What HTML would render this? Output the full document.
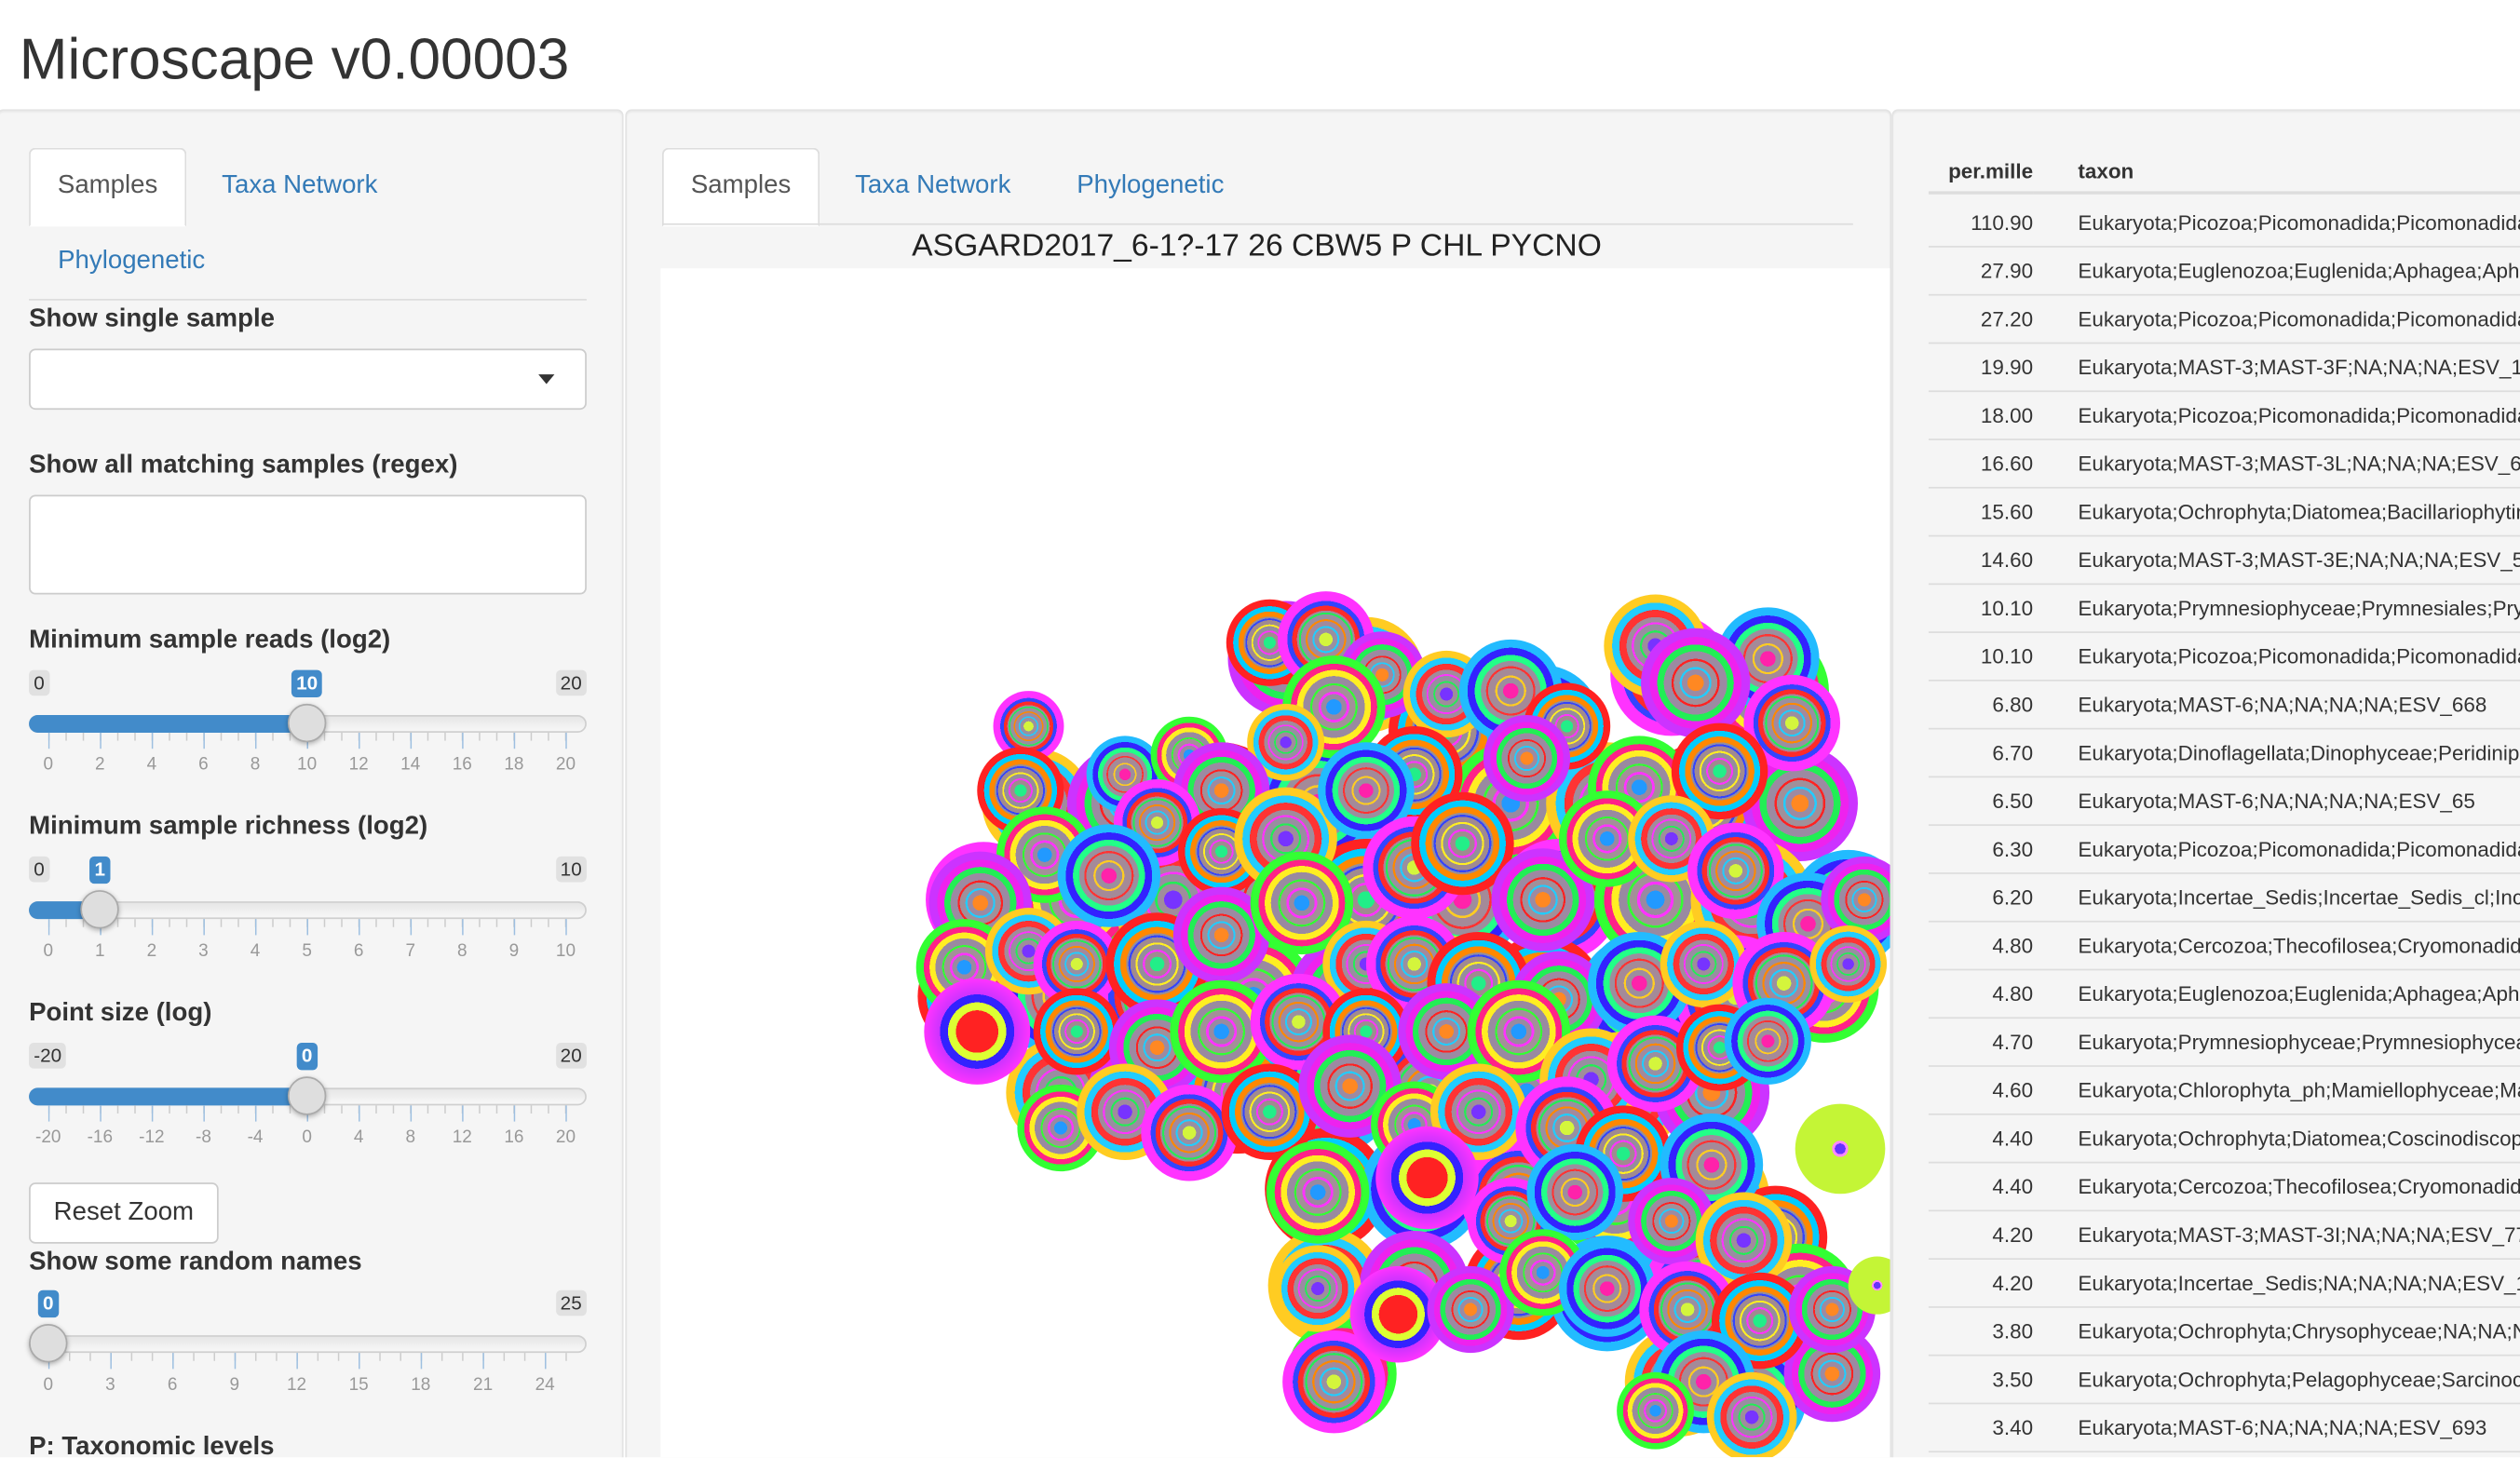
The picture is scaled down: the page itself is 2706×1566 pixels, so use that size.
<!DOCTYPE html>
<html><head><meta charset="utf-8">
<style>
html,body{margin:0;padding:0;width:2706px;height:1566px;overflow:hidden;background:#fff}
.wrap{position:absolute;left:0;top:0;width:1568px;height:907px;transform:scale(1.72577);transform-origin:0 0;font-family:"Liberation Sans",Arial,sans-serif;color:#333;overflow:hidden}
.abs{position:absolute}
h1{position:absolute;left:12px;top:14px;margin:0;font-size:36px;font-weight:500;color:#333;line-height:46px}
.panel{position:absolute;top:68px;height:860px;background:#f5f5f5;border:1px solid #e3e3e3;border-radius:4px;box-shadow:inset 0 1px 1px rgba(0,0,0,.05)}
.tab{position:absolute;font-size:16px;line-height:20px}
.tab.active{background:#fff;border:1px solid #ddd;border-bottom-color:transparent;border-radius:4px 4px 0 0;color:#555;text-align:center}
.link{color:#337ab7}
.lbl{position:absolute;left:18px;font-size:16px;font-weight:bold;color:#333;line-height:20px}
.box{position:absolute;left:18px;width:345px;background:#fff;border:1px solid #ccc;border-radius:4px}
.slider{position:absolute;left:18px;width:347px;height:60px}
.track{position:absolute;left:0;top:-5px;width:345px;height:9px;border:1px solid #cfcfcf;border-radius:6px;background:linear-gradient(#e6e6e6,#f7f7f7)}
.fill{position:absolute;left:0;top:-5px;height:11px;background:#428bca;border-radius:6px 0 0 6px}
.handle{position:absolute;top:-12px;width:24px;height:24px;margin-left:-12px;border-radius:50%;background:#dedede;border:1px solid #aaa;box-sizing:border-box;box-shadow:0 1px 3px rgba(0,0,0,.3)}
.mm{position:absolute;top:-33px;height:16px;line-height:16px;font-size:12px;background:#e1e1e1;border-radius:3px;padding:0 3px;color:#333}
.val{position:absolute;top:-33px;height:17px;line-height:17px;font-size:12px;background:#428bca;color:#fff;font-weight:bold;border-radius:3px;padding:0 3px;transform:translateX(-50%)}
.ticks{position:absolute;left:12px;top:6px;height:10px}
.tl{position:absolute;top:20px;font-size:11px;color:#999;transform:translateX(-50%)}
table{border-collapse:collapse;font-size:13px;color:#333}
.r{position:relative;height:30px;line-height:30px;width:65px;text-align:right;color:#333}
.r s{text-decoration:none;position:absolute;left:93px;top:0}
.r::after{content:"";position:absolute;left:0;bottom:0;width:380px;height:1px;background:#ddd}
</style></head><body><div class="wrap">
<h1>Microscape v0.00003</h1>

<div class="panel" style="left:-2px;width:388px"></div>
<div class="tab active" style="left:18px;top:92px;width:96px;height:47px;line-height:46px">Samples</div>
<div class="tab link" style="left:138px;top:106px">Taxa Network</div>
<div class="tab link" style="left:36px;top:153px">Phylogenetic</div>
<div class="abs" style="left:18px;top:186px;width:347px;height:1px;background:#ddd"></div>

<div class="lbl" style="top:189px">Show single sample</div>
<div class="box" style="top:217px;height:36px"><div class="abs" style="right:19px;top:15px;width:0;height:0;border-left:5px solid transparent;border-right:5px solid transparent;border-top:6px solid #333"></div></div>
<div class="lbl" style="top:280px">Show all matching samples (regex)</div>
<div class="box" style="top:308px;height:60px"></div>

<div class="lbl" style="top:389px">Minimum sample reads (log2)</div>
<div class="slider" style="top:450px">
 <div class="track"></div><div class="fill" style="width:173px"></div>
 <div class="mm" style="left:0">0</div><div class="mm" style="right:0">20</div><div class="val" style="left:173px">10</div>
 <div class="ticks" style="width:324px;background:linear-gradient(90deg,#9dbfe0 1px,transparent 1px) 0 0/32.2px 10px repeat-x,linear-gradient(90deg,#ccc 1px,transparent 1px) 0 0/10.733px 5px repeat-x"></div>
 <div class="tl" style="left:12px">0</div><div class="tl" style="left:44.2px">2</div><div class="tl" style="left:76.4px">4</div><div class="tl" style="left:108.6px">6</div><div class="tl" style="left:140.8px">8</div><div class="tl" style="left:173px">10</div><div class="tl" style="left:205.2px">12</div><div class="tl" style="left:237.4px">14</div><div class="tl" style="left:269.6px">16</div><div class="tl" style="left:301.8px">18</div><div class="tl" style="left:334px">20</div>
 <div class="handle" style="left:173px"></div>
</div>

<div class="lbl" style="top:505px">Minimum sample richness (log2)</div>
<div class="slider" style="top:566px">
 <div class="track"></div><div class="fill" style="width:44px"></div>
 <div class="mm" style="left:0">0</div><div class="mm" style="right:0">10</div><div class="val" style="left:44.2px">1</div>
 <div class="ticks" style="width:324px;background:linear-gradient(90deg,#9dbfe0 1px,transparent 1px) 0 0/32.2px 10px repeat-x,linear-gradient(90deg,#ccc 1px,transparent 1px) 0 0/10.733px 5px repeat-x"></div>
 <div class="tl" style="left:12px">0</div><div class="tl" style="left:44.2px">1</div><div class="tl" style="left:76.4px">2</div><div class="tl" style="left:108.6px">3</div><div class="tl" style="left:140.8px">4</div><div class="tl" style="left:173px">5</div><div class="tl" style="left:205.2px">6</div><div class="tl" style="left:237.4px">7</div><div class="tl" style="left:269.6px">8</div><div class="tl" style="left:301.8px">9</div><div class="tl" style="left:334px">10</div>
 <div class="handle" style="left:44.2px"></div>
</div>

<div class="lbl" style="top:621px">Point size (log)</div>
<div class="slider" style="top:682px">
 <div class="track"></div><div class="fill" style="width:173px"></div>
 <div class="mm" style="left:0">-20</div><div class="mm" style="right:0">20</div><div class="val" style="left:173px">0</div>
 <div class="ticks" style="width:324px;background:linear-gradient(90deg,#9dbfe0 1px,transparent 1px) 0 0/32.2px 10px repeat-x,linear-gradient(90deg,#ccc 1px,transparent 1px) 0 0/10.733px 5px repeat-x"></div>
 <div class="tl" style="left:12px">-20</div><div class="tl" style="left:44.2px">-16</div><div class="tl" style="left:76.4px">-12</div><div class="tl" style="left:108.6px">-8</div><div class="tl" style="left:140.8px">-4</div><div class="tl" style="left:173px">0</div><div class="tl" style="left:205.2px">4</div><div class="tl" style="left:237.4px">8</div><div class="tl" style="left:269.6px">12</div><div class="tl" style="left:301.8px">16</div><div class="tl" style="left:334px">20</div>
 <div class="handle" style="left:173px"></div>
</div>

<div class="abs" style="left:18px;top:736px;width:116px;height:36px;background:#fff;border:1px solid #ccc;border-radius:4px;font-size:16px;line-height:36px;text-align:center;color:#333">Reset Zoom</div>

<div class="lbl" style="top:776px">Show some random names</div>
<div class="slider" style="top:836px">
 <div class="track"></div>
 <div class="mm" style="right:0">25</div><div class="val" style="left:12px">0</div>
 <div class="ticks" style="width:324px;background:linear-gradient(90deg,#9dbfe0 1px,transparent 1px) 0 0/38.64px 10px repeat-x,linear-gradient(90deg,#ccc 1px,transparent 1px) 0 0/12.88px 5px repeat-x"></div>
 <div class="tl" style="left:12px">0</div><div class="tl" style="left:50.6px">3</div><div class="tl" style="left:89.3px">6</div><div class="tl" style="left:127.9px">9</div><div class="tl" style="left:166.6px">12</div><div class="tl" style="left:205.2px">15</div><div class="tl" style="left:243.8px">18</div><div class="tl" style="left:282.5px">21</div><div class="tl" style="left:321.1px">24</div>
 <div class="handle" style="left:12px"></div>
</div>
<div class="lbl" style="top:891px">P: Taxonomic levels</div>

<div class="panel" style="left:389px;width:786px"></div>
<div class="tab active" style="left:412px;top:92px;width:96px;height:47px;line-height:46px">Samples</div>
<div class="tab link" style="left:532px;top:106px">Taxa Network</div>
<div class="tab link" style="left:670px;top:106px">Phylogenetic</div>
<div class="abs" style="left:412px;top:139px;width:741px;height:1px;background:#ddd"></div>
<div class="abs" style="left:411px;top:142px;width:742px;text-align:center;font-size:19.5px;line-height:22px;color:#222">ASGARD2017_6-1?-17 26 CBW5 P CHL PYCNO</div>
<div class="abs" style="left:411px;top:167px;width:765px;height:740px;background:#fff;overflow:hidden">
<svg width="765" height="740" viewBox="411 167 765 740" xmlns="http://www.w3.org/2000/svg">
<defs>
<radialGradient id="g1"><stop offset="0" stop-color="#d4f53c"/><stop offset=".14" stop-color="#d4f53c"/><stop offset=".14" stop-color="#9a8fa0"/><stop offset=".24" stop-color="#9a8fa0"/><stop offset=".24" stop-color="#22ccff"/><stop offset=".28" stop-color="#22ccff"/><stop offset=".28" stop-color="#a3899c"/><stop offset=".38" stop-color="#a3899c"/><stop offset=".38" stop-color="#ff8800"/><stop offset=".42" stop-color="#ff8800"/><stop offset=".42" stop-color="#9a8fa0"/><stop offset=".52" stop-color="#9a8fa0"/><stop offset=".52" stop-color="#22ee55"/><stop offset=".56" stop-color="#22ee55"/><stop offset=".56" stop-color="#a3899c"/><stop offset=".6" stop-color="#a3899c"/><stop offset=".6" stop-color="#ff2a2a"/><stop offset=".7" stop-color="#ff2a2a"/><stop offset=".7" stop-color="#3344ff"/><stop offset=".8" stop-color="#3344ff"/><stop offset=".8" stop-color="#ff33ff"/><stop offset="1" stop-color="#ff33ff"/></radialGradient>
<radialGradient id="g2"><stop offset="0" stop-color="#22ee88"/><stop offset=".14" stop-color="#22ee88"/><stop offset=".14" stop-color="#a08a90"/><stop offset=".24" stop-color="#a08a90"/><stop offset=".24" stop-color="#ff33ff"/><stop offset=".28" stop-color="#ff33ff"/><stop offset=".28" stop-color="#948e9c"/><stop offset=".38" stop-color="#948e9c"/><stop offset=".38" stop-color="#ffee22"/><stop offset=".42" stop-color="#ffee22"/><stop offset=".42" stop-color="#a08a90"/><stop offset=".52" stop-color="#a08a90"/><stop offset=".52" stop-color="#3344ff"/><stop offset=".56" stop-color="#3344ff"/><stop offset=".56" stop-color="#948e9c"/><stop offset=".6" stop-color="#948e9c"/><stop offset=".6" stop-color="#ff8800"/><stop offset=".72" stop-color="#ff8800"/><stop offset=".72" stop-color="#00ccff"/><stop offset=".84" stop-color="#00ccff"/><stop offset=".84" stop-color="#ff2222"/><stop offset="1" stop-color="#ff2222"/></radialGradient>
<radialGradient id="g3"><stop offset="0" stop-color="#ff8822"/><stop offset=".15" stop-color="#ff8822"/><stop offset=".15" stop-color="#9c8aa2"/><stop offset=".25" stop-color="#9c8aa2"/><stop offset=".25" stop-color="#22ccff"/><stop offset=".29" stop-color="#22ccff"/><stop offset=".29" stop-color="#a0909a"/><stop offset=".4" stop-color="#a0909a"/><stop offset=".4" stop-color="#ff2222"/><stop offset=".44" stop-color="#ff2222"/><stop offset=".44" stop-color="#9c8aa2"/><stop offset=".58" stop-color="#9c8aa2"/><stop offset=".58" stop-color="#22ee55"/><stop offset=".7" stop-color="#22ee55"/><stop offset=".7" stop-color="#ee22ee"/><stop offset=".84" stop-color="#ee22ee"/><stop offset=".84" stop-color="#cc33ff"/><stop offset="1" stop-color="#cc33ff"/></radialGradient>
<radialGradient id="g4"><stop offset="0" stop-color="#2299ff"/><stop offset=".15" stop-color="#2299ff"/><stop offset=".15" stop-color="#998aa0"/><stop offset=".25" stop-color="#998aa0"/><stop offset=".25" stop-color="#ff33ff"/><stop offset=".3" stop-color="#ff33ff"/><stop offset=".3" stop-color="#a39098"/><stop offset=".42" stop-color="#a39098"/><stop offset=".42" stop-color="#33ff33"/><stop offset=".46" stop-color="#33ff33"/><stop offset=".46" stop-color="#998aa0"/><stop offset=".6" stop-color="#998aa0"/><stop offset=".6" stop-color="#ffee22"/><stop offset=".72" stop-color="#ffee22"/><stop offset=".72" stop-color="#ff2288"/><stop offset=".84" stop-color="#ff2288"/><stop offset=".84" stop-color="#33ff33"/><stop offset="1" stop-color="#33ff33"/></radialGradient>
<radialGradient id="g5"><stop offset="0" stop-color="#7733ff"/><stop offset=".15" stop-color="#7733ff"/><stop offset=".15" stop-color="#a08c9c"/><stop offset=".26" stop-color="#a08c9c"/><stop offset=".26" stop-color="#22ee55"/><stop offset=".3" stop-color="#22ee55"/><stop offset=".3" stop-color="#988ea0"/><stop offset=".42" stop-color="#988ea0"/><stop offset=".42" stop-color="#ff33ff"/><stop offset=".46" stop-color="#ff33ff"/><stop offset=".46" stop-color="#a08c9c"/><stop offset=".56" stop-color="#a08c9c"/><stop offset=".56" stop-color="#ff3333"/><stop offset=".7" stop-color="#ff3333"/><stop offset=".7" stop-color="#22ccff"/><stop offset=".84" stop-color="#22ccff"/><stop offset=".84" stop-color="#ffcc22"/><stop offset="1" stop-color="#ffcc22"/></radialGradient>
<radialGradient id="g6"><stop offset="0" stop-color="#ff22aa"/><stop offset=".15" stop-color="#ff22aa"/><stop offset=".15" stop-color="#9c8e9e"/><stop offset=".26" stop-color="#9c8e9e"/><stop offset=".26" stop-color="#ffcc22"/><stop offset=".3" stop-color="#ffcc22"/><stop offset=".3" stop-color="#a48a98"/><stop offset=".44" stop-color="#a48a98"/><stop offset=".44" stop-color="#ff3333"/><stop offset=".48" stop-color="#ff3333"/><stop offset=".48" stop-color="#9c8e9e"/><stop offset=".58" stop-color="#9c8e9e"/><stop offset=".58" stop-color="#22ff88"/><stop offset=".7" stop-color="#22ff88"/><stop offset=".7" stop-color="#3322ff"/><stop offset=".84" stop-color="#3322ff"/><stop offset=".84" stop-color="#22bbff"/><stop offset="1" stop-color="#22bbff"/></radialGradient>
<radialGradient id="g7"><stop offset="0" stop-color="#ff2222"/><stop offset=".4" stop-color="#ff2222"/><stop offset=".4" stop-color="#ddff33"/><stop offset=".55" stop-color="#ddff33"/><stop offset=".55" stop-color="#3322ff"/><stop offset=".7" stop-color="#3322ff"/><stop offset=".7" stop-color="#cc33ff"/><stop offset="1" stop-color="#ff33ff"/></radialGradient>
<radialGradient id="g8"><stop offset="0" stop-color="#6633ff"/><stop offset=".12" stop-color="#6633ff"/><stop offset=".12" stop-color="#ff88ff"/><stop offset=".18" stop-color="#ff88ff"/><stop offset=".18" stop-color="#c4f536"/><stop offset="1" stop-color="#c4f536"/></radialGradient>
</defs>
<g>
<circle cx="800" cy="410" r="36" fill="url(#g3)"/><circle cx="850" cy="420" r="36" fill="url(#g5)"/><circle cx="1040" cy="420" r="38" fill="url(#g1)"/><circle cx="1100" cy="430" r="38" fill="url(#g4)"/><circle cx="900" cy="455" r="36" fill="url(#g2)"/><circle cx="960" cy="450" r="36" fill="url(#g6)"/>
<circle cx="645" cy="500" r="34" fill="url(#g5)"/><circle cx="700" cy="500" r="36" fill="url(#g3)"/><circle cx="760" cy="500" r="38" fill="url(#g2)"/><circle cx="820" cy="500" r="38" fill="url(#g6)"/><circle cx="880" cy="500" r="38" fill="url(#g1)"/><circle cx="940" cy="500" r="38" fill="url(#g4)"/><circle cx="1000" cy="500" r="38" fill="url(#g5)"/><circle cx="1060" cy="500" r="38" fill="url(#g2)"/><circle cx="1120" cy="500" r="36" fill="url(#g3)"/>
<circle cx="612" cy="560" r="36" fill="url(#g1)"/><circle cx="670" cy="560" r="38" fill="url(#g4)"/><circle cx="730" cy="560" r="38" fill="url(#g5)"/><circle cx="790" cy="560" r="38" fill="url(#g3)"/><circle cx="850" cy="560" r="38" fill="url(#g2)"/><circle cx="910" cy="560" r="38" fill="url(#g6)"/><circle cx="970" cy="560" r="38" fill="url(#g1)"/><circle cx="1030" cy="560" r="38" fill="url(#g4)"/><circle cx="1090" cy="560" r="38" fill="url(#g5)"/><circle cx="1150" cy="565" r="36" fill="url(#g6)"/>
<circle cx="605" cy="620" r="34" fill="url(#g2)"/><circle cx="660" cy="620" r="38" fill="url(#g6)"/><circle cx="720" cy="620" r="38" fill="url(#g1)"/><circle cx="780" cy="620" r="38" fill="url(#g4)"/><circle cx="840" cy="620" r="38" fill="url(#g3)"/><circle cx="900" cy="620" r="38" fill="url(#g5)"/><circle cx="960" cy="620" r="38" fill="url(#g2)"/><circle cx="1020" cy="620" r="38" fill="url(#g6)"/><circle cx="1080" cy="620" r="38" fill="url(#g1)"/><circle cx="1135" cy="615" r="34" fill="url(#g4)"/>
<circle cx="660" cy="680" r="34" fill="url(#g5)"/><circle cx="715" cy="680" r="38" fill="url(#g3)"/><circle cx="770" cy="680" r="38" fill="url(#g2)"/><circle cx="830" cy="680" r="38" fill="url(#g6)"/><circle cx="890" cy="680" r="38" fill="url(#g1)"/><circle cx="950" cy="680" r="38" fill="url(#g4)"/><circle cx="1010" cy="680" r="38" fill="url(#g5)"/><circle cx="1065" cy="680" r="36" fill="url(#g3)"/>
<circle cx="825" cy="740" r="38" fill="url(#g2)"/><circle cx="885" cy="740" r="38" fill="url(#g6)"/><circle cx="945" cy="745" r="36" fill="url(#g1)"/><circle cx="1005" cy="745" r="38" fill="url(#g4)"/><circle cx="1065" cy="745" r="36" fill="url(#g5)"/><circle cx="1105" cy="770" r="32" fill="url(#g2)"/>
<circle cx="825" cy="800" r="36" fill="url(#g5)"/><circle cx="880" cy="800" r="34" fill="url(#g3)"/><circle cx="945" cy="800" r="34" fill="url(#g2)"/><circle cx="1000" cy="805" r="36" fill="url(#g6)"/><circle cx="1060" cy="805" r="38" fill="url(#g1)"/><circle cx="1120" cy="810" r="36" fill="url(#g4)"/>
<circle cx="835" cy="855" r="34" fill="url(#g4)"/><circle cx="1045" cy="860" r="34" fill="url(#g5)"/><circle cx="1090" cy="870" r="34" fill="url(#g6)"/><circle cx="1140" cy="855" r="30" fill="url(#g3)"/>
</g>
<g>
<circle cx="790" cy="400" r="27" fill="url(#g2)"/><circle cx="825" cy="398" r="30" fill="url(#g1)"/><circle cx="860" cy="420" r="27" fill="url(#g3)"/><circle cx="830" cy="440" r="32" fill="url(#g4)"/><circle cx="900" cy="432" r="27" fill="url(#g5)"/><circle cx="940" cy="430" r="32" fill="url(#g6)"/><circle cx="975" cy="452" r="27" fill="url(#g2)"/><circle cx="1030" cy="402" r="32" fill="url(#g5)"/><circle cx="1100" cy="410" r="32" fill="url(#g6)"/><circle cx="1055" cy="425" r="34" fill="url(#g3)"/><circle cx="1115" cy="450" r="30" fill="url(#g1)"/><circle cx="950" cy="472" r="27" fill="url(#g3)"/><circle cx="880" cy="482" r="30" fill="url(#g2)"/><circle cx="800" cy="462" r="24" fill="url(#g5)"/><circle cx="1020" cy="490" r="32" fill="url(#g4)"/><circle cx="1070" cy="480" r="30" fill="url(#g2)"/>
<circle cx="640" cy="452" r="22" fill="url(#g1)"/><circle cx="635" cy="492" r="27" fill="url(#g2)"/><circle cx="700" cy="482" r="24" fill="url(#g6)"/><circle cx="740" cy="470" r="24" fill="url(#g4)"/><circle cx="760" cy="492" r="30" fill="url(#g3)"/><circle cx="720" cy="512" r="27" fill="url(#g1)"/><circle cx="650" cy="532" r="30" fill="url(#g4)"/><circle cx="610" cy="562" r="32" fill="url(#g3)"/><circle cx="690" cy="545" r="32" fill="url(#g6)"/><circle cx="760" cy="530" r="27" fill="url(#g2)"/><circle cx="800" cy="522" r="32" fill="url(#g5)"/><circle cx="850" cy="492" r="30" fill="url(#g6)"/>
<circle cx="880" cy="540" r="32" fill="url(#g1)"/><circle cx="910" cy="525" r="32" fill="url(#g2)"/><circle cx="960" cy="560" r="32" fill="url(#g3)"/><circle cx="1000" cy="522" r="30" fill="url(#g4)"/><circle cx="1040" cy="522" r="27" fill="url(#g5)"/><circle cx="1080" cy="542" r="30" fill="url(#g1)"/><circle cx="1125" cy="575" r="32" fill="url(#g6)"/><circle cx="1160" cy="560" r="27" fill="url(#g3)"/>
<circle cx="600" cy="602" r="30" fill="url(#g4)"/><circle cx="640" cy="592" r="27" fill="url(#g5)"/><circle cx="670" cy="600" r="27" fill="url(#g1)"/><circle cx="720" cy="600" r="32" fill="url(#g2)"/><circle cx="760" cy="582" r="30" fill="url(#g3)"/><circle cx="810" cy="562" r="32" fill="url(#g4)"/><circle cx="850" cy="600" r="27" fill="url(#g5)"/><circle cx="880" cy="600" r="30" fill="url(#g1)"/><circle cx="920" cy="612" r="32" fill="url(#g2)"/><circle cx="970" cy="622" r="30" fill="url(#g3)"/><circle cx="1020" cy="612" r="32" fill="url(#g6)"/><circle cx="1060" cy="600" r="27" fill="url(#g5)"/><circle cx="1110" cy="612" r="32" fill="url(#g1)"/><circle cx="1150" cy="600" r="24" fill="url(#g5)"/>
<circle cx="608" cy="642" r="33" fill="url(#g7)"/><circle cx="670" cy="642" r="27" fill="url(#g2)"/><circle cx="720" cy="652" r="30" fill="url(#g3)"/><circle cx="760" cy="642" r="32" fill="url(#g4)"/><circle cx="808" cy="636" r="30" fill="url(#g1)"/><circle cx="850" cy="642" r="27" fill="url(#g2)"/><circle cx="900" cy="642" r="30" fill="url(#g3)"/><circle cx="945" cy="642" r="32" fill="url(#g4)"/><circle cx="990" cy="672" r="32" fill="url(#g5)"/><circle cx="1030" cy="662" r="30" fill="url(#g1)"/><circle cx="1070" cy="652" r="27" fill="url(#g2)"/><circle cx="1100" cy="648" r="27" fill="url(#g6)"/>
<circle cx="660" cy="702" r="27" fill="url(#g4)"/><circle cx="700" cy="692" r="30" fill="url(#g5)"/><circle cx="740" cy="705" r="30" fill="url(#g1)"/><circle cx="790" cy="692" r="30" fill="url(#g2)"/><circle cx="840" cy="676" r="32" fill="url(#g3)"/><circle cx="880" cy="700" r="27" fill="url(#g4)"/><circle cx="920" cy="692" r="30" fill="url(#g5)"/><circle cx="975" cy="702" r="32" fill="url(#g1)"/><circle cx="1010" cy="718" r="30" fill="url(#g2)"/><circle cx="1065" cy="725" r="32" fill="url(#g6)"/><circle cx="1145" cy="715" r="28" fill="url(#g8)"/>
<circle cx="820" cy="742" r="32" fill="url(#g4)"/><circle cx="888" cy="733" r="32" fill="url(#g7)"/><circle cx="940" cy="760" r="27" fill="url(#g1)"/><circle cx="980" cy="742" r="30" fill="url(#g6)"/><circle cx="1040" cy="760" r="27" fill="url(#g3)"/><circle cx="1085" cy="772" r="30" fill="url(#g5)"/>
<circle cx="820" cy="802" r="27" fill="url(#g5)"/><circle cx="830" cy="860" r="32" fill="url(#g1)"/><circle cx="870" cy="818" r="30" fill="url(#g7)"/><circle cx="915" cy="815" r="27" fill="url(#g3)"/><circle cx="960" cy="792" r="27" fill="url(#g4)"/><circle cx="1000" cy="802" r="30" fill="url(#g6)"/><circle cx="1050" cy="815" r="30" fill="url(#g1)"/><circle cx="1095" cy="822" r="30" fill="url(#g2)"/><circle cx="1140" cy="815" r="27" fill="url(#g3)"/><circle cx="1060" cy="860" r="32" fill="url(#g6)"/><circle cx="1090" cy="882" r="28" fill="url(#g5)"/><circle cx="1030" cy="878" r="24" fill="url(#g4)"/><circle cx="1168" cy="800" r="18" fill="url(#g8)"/>
</g></svg></div>

<div class="panel" style="left:1177px;width:400px"></div>
<div class="abs" style="left:1200px;top:94px;width:380px">
<table style="width:380px">
<tr style="height:26px;border-bottom:2px solid #ddd;font-weight:bold"><td style="width:65px;text-align:right;padding:0">per.mille</td><td style="padding:0 0 0 28px">taxon</td></tr>
</table>
<div style="font-size:13px;white-space:nowrap;margin-top:3px">
<div class="r">110.90<s>Eukaryota;Picozoa;Picomonadida;Picomonadida</s></div>
<div class="r">27.90<s>Eukaryota;Euglenozoa;Euglenida;Aphagea;Aphagea</s></div>
<div class="r">27.20<s>Eukaryota;Picozoa;Picomonadida;Picomonadida</s></div>
<div class="r">19.90<s>Eukaryota;MAST-3;MAST-3F;NA;NA;NA;ESV_14</s></div>
<div class="r">18.00<s>Eukaryota;Picozoa;Picomonadida;Picomonadida</s></div>
<div class="r">16.60<s>Eukaryota;MAST-3;MAST-3L;NA;NA;NA;ESV_61</s></div>
<div class="r">15.60<s>Eukaryota;Ochrophyta;Diatomea;Bacillariophytina</s></div>
<div class="r">14.60<s>Eukaryota;MAST-3;MAST-3E;NA;NA;NA;ESV_55</s></div>
<div class="r">10.10<s>Eukaryota;Prymnesiophyceae;Prymnesiales;Prym</s></div>
<div class="r">10.10<s>Eukaryota;Picozoa;Picomonadida;Picomonadida</s></div>
<div class="r">6.80<s>Eukaryota;MAST-6;NA;NA;NA;NA;ESV_668</s></div>
<div class="r">6.70<s>Eukaryota;Dinoflagellata;Dinophyceae;Peridinip</s></div>
<div class="r">6.50<s>Eukaryota;MAST-6;NA;NA;NA;NA;ESV_65</s></div>
<div class="r">6.30<s>Eukaryota;Picozoa;Picomonadida;Picomonadida</s></div>
<div class="r">6.20<s>Eukaryota;Incertae_Sedis;Incertae_Sedis_cl;Inc</s></div>
<div class="r">4.80<s>Eukaryota;Cercozoa;Thecofilosea;Cryomonadida</s></div>
<div class="r">4.80<s>Eukaryota;Euglenozoa;Euglenida;Aphagea;Aphagea</s></div>
<div class="r">4.70<s>Eukaryota;Prymnesiophyceae;Prymnesiophyceae</s></div>
<div class="r">4.60<s>Eukaryota;Chlorophyta_ph;Mamiellophyceae;Ma</s></div>
<div class="r">4.40<s>Eukaryota;Ochrophyta;Diatomea;Coscinodiscop</s></div>
<div class="r">4.40<s>Eukaryota;Cercozoa;Thecofilosea;Cryomonadida</s></div>
<div class="r">4.20<s>Eukaryota;MAST-3;MAST-3I;NA;NA;NA;ESV_77</s></div>
<div class="r">4.20<s>Eukaryota;Incertae_Sedis;NA;NA;NA;NA;ESV_1</s></div>
<div class="r">3.80<s>Eukaryota;Ochrophyta;Chrysophyceae;NA;NA;NA</s></div>
<div class="r">3.50<s>Eukaryota;Ochrophyta;Pelagophyceae;Sarcinoc</s></div>
<div class="r">3.40<s>Eukaryota;MAST-6;NA;NA;NA;NA;ESV_693</s></div>
</div></div>
</div></body></html>
